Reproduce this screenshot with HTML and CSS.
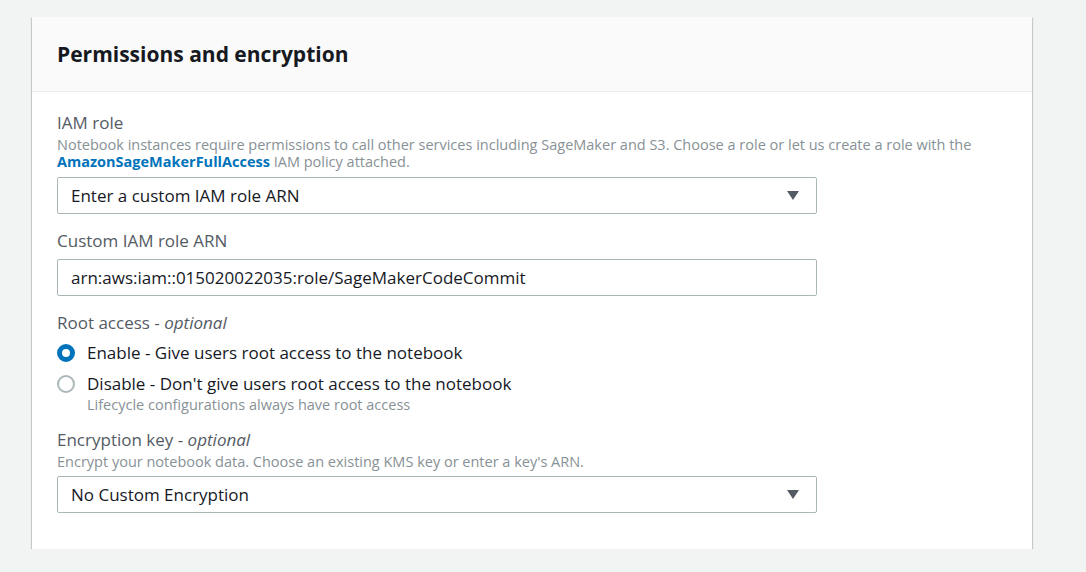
FILE: index.html
```html
<!DOCTYPE html>
<html>
<head>
<meta charset="utf-8">
<link rel="stylesheet" href="styles.css">
</head>
<body>
<div class="page">
  <section class="card">
    <header class="card-header">
      <h2 class="card-title">Permissions and encryption</h2>
    </header>
    <div class="card-body">
      <div class="field">
        <div class="label">IAM role</div>
        <div class="desc">Notebook instances require permissions to call other services including SageMaker and S3. Choose a role or let us create a role with the <a class="link">AmazonSageMakerFullAccess</a> IAM policy attached.</div>
        <div class="select">
          <span class="select-text">Enter a custom IAM role ARN</span>
          <span class="caret"></span>
        </div>
      </div>
      <div class="field">
        <div class="label">Custom IAM role ARN</div>
        <div class="input">arn:aws:iam::015020022035:role/SageMakerCodeCommit</div>
      </div>
      <div class="field">
        <div class="label">Root access - <i>optional</i></div>
        <div class="radios">
          <div class="radio-row">
            <span class="radio checked"></span>
            <div class="radio-text">
              <div class="radio-label">Enable - Give users root access to the notebook</div>
            </div>
          </div>
          <div class="radio-row">
            <span class="radio"></span>
            <div class="radio-text">
              <div class="radio-label">Disable - Don't give users root access to the notebook</div>
              <div class="radio-desc">Lifecycle configurations always have root access</div>
            </div>
          </div>
        </div>
      </div>
      <div class="field">
        <div class="label">Encryption key - <i>optional</i></div>
        <div class="desc">Encrypt your notebook data. Choose an existing KMS key or enter a key's ARN.</div>
        <div class="select select-last">
          <span class="select-text">No Custom Encryption</span>
          <span class="caret"></span>
        </div>
      </div>
    </div>
  </section>
</div>
</body>
</html>
```
FILE: styles.css
```css
* { box-sizing: border-box; }
html, body { margin: 0; padding: 0; }
body {
  background: #f2f3f3;
  font-family: "Open Sans", "Noto Sans", sans-serif;
  color: #16191f;
}
.page {
  padding: 17px 54px 0 32px;
}
.card {
  width: 1000px;
  background: #fff;
  box-shadow: 0 1px 1px 0 rgba(0,28,36,.3), 1px 1px 1px 0 rgba(0,28,36,.15), -1px 1px 1px 0 rgba(0,28,36,.15);
}
.card-header {
  background: #fafafa;
  border-bottom: 1px solid #eaeded;
  height: 75px;
  display: flex;
  align-items: center;
  padding: 0 25px;
}
.card-title {
  margin: 0;
  font-size: 21px;
  font-weight: 700;
  color: #16191f;
}
.card-body {
  padding: 19px 25px 36px;
  display: flex;
  flex-direction: column;
  gap: 15px;
}
.label {
  font-size: 17px;
  color: #545b64;
  line-height: 24px;
}
.desc {
  font-size: 14.5px;
  color: #879196;
  line-height: 17px;
  margin-top: 1px;
}
.link {
  color: #0073bb;
  font-weight: 700;
}
.select, .input {
  width: 760px;
  height: 37px;
  border: 1px solid #aab7b8;
  border-radius: 2px;
  display: flex;
  align-items: center;
  padding: 0 17px 0 13px;
  font-size: 17px;
  color: #16191f;
}
.select { margin-top: 7px; }
.select-last { margin-top: 6px; }
.input { margin-top: 6px; }
.select-text { flex: 1; }
.caret {
  width: 0;
  height: 0;
  border-left: 6.5px solid transparent;
  border-right: 6.5px solid transparent;
  border-top: 9px solid #545b64;
}
.radios {
  display: flex;
  flex-direction: column;
  gap: 7px;
  margin-top: 6px;
}
.radio-row {
  display: flex;
  align-items: flex-start;
  gap: 12px;
}
.radio {
  width: 18px;
  height: 18px;
  border-radius: 50%;
  border: 2px solid #aab7b8;
  background: #fff;
  margin-top: 3px;
  flex: none;
}
.radio.checked {
  border: 5px solid #0073bb;
}
.radio-label {
  font-size: 17px;
  line-height: 24px;
  color: #16191f;
}
.radio-desc {
  font-size: 14.5px;
  color: #879196;
  line-height: 17px;
}
```
